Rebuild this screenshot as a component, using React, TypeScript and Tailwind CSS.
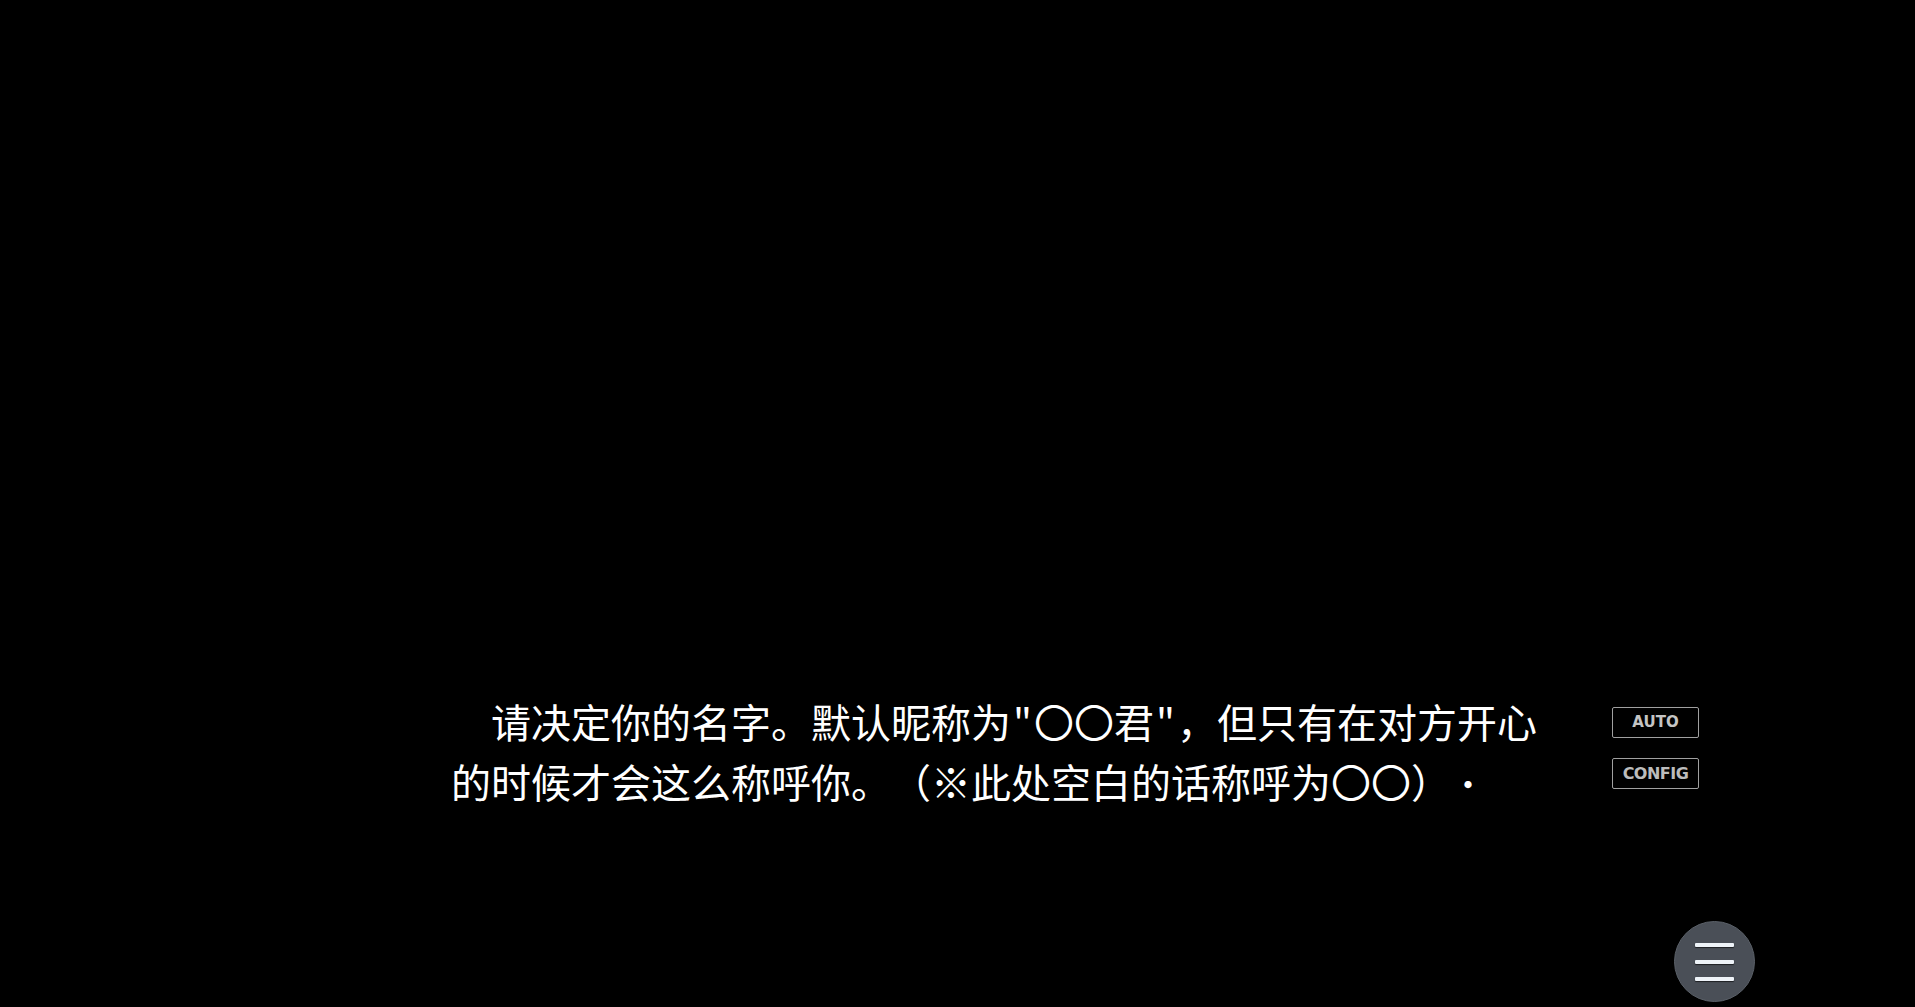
import React from "react";

export default function App() {
  return (
    <div className="w-[1915px] h-[1007px] bg-black overflow-hidden flex flex-col">
      <div className="flex flex-row pl-[451px] pt-[691px]">
        <div
          className="w-[1161px] text-[40px] leading-[60px] text-white whitespace-pre [text-spacing-trim:space-all] [font-kerning:none]"
          style={{ fontFamily: '"Noto Sans CJK SC", "Noto Sans", sans-serif' }}
        >
          <div>
            {"\u3000请决定你的名字。默认昵称为"}
            <span className="inline-block pl-[2px] pr-[2px]">"</span>
            {"〇〇君"}
            <span className="inline-block pl-[2px] pr-[2px]">"</span>
            {"，但只有在对方开心"}
          </div>
          <div>
            {"的时候才会这么称呼你。（※此处空白的话称呼为〇〇）"}
            <span className="text-[34px]">・</span>
          </div>
        </div>
        <div className="flex flex-col gap-[20px] pt-[16px]">
          <div
            className="w-[87px] h-[31px] border border-[#a0a0a0] rounded-[2px] flex items-center justify-center text-[15px] font-bold text-[#c4c4c4]"
            style={{ fontFamily: '"DejaVu Sans", sans-serif' }}
          >
            AUTO
          </div>
          <div
            className="w-[87px] h-[31px] border border-[#a0a0a0] rounded-[2px] flex items-center justify-center text-[16px] font-bold text-[#bcbcbc] tracking-[-0.5px]"
            style={{ fontFamily: '"DejaVu Sans", sans-serif' }}
          >
            CONFIG
          </div>
        </div>
      </div>
      <div className="flex justify-end pr-[160px] mt-[107px]">
        <div className="w-[81px] h-[81px] rounded-full bg-[#4a4f57] border border-[#5a6068] flex flex-col items-center justify-center gap-[13px]">
          <div className="w-[39px] h-[4px] rounded-[1px] bg-[#eef3f8] shadow-[0_1px_1px_rgba(0,0,0,0.6)]" />
          <div className="w-[39px] h-[4px] rounded-[1px] bg-[#eef3f8] shadow-[0_1px_1px_rgba(0,0,0,0.6)]" />
          <div className="w-[39px] h-[4px] rounded-[1px] bg-[#eef3f8] shadow-[0_1px_1px_rgba(0,0,0,0.6)]" />
        </div>
      </div>
    </div>
  );
}
